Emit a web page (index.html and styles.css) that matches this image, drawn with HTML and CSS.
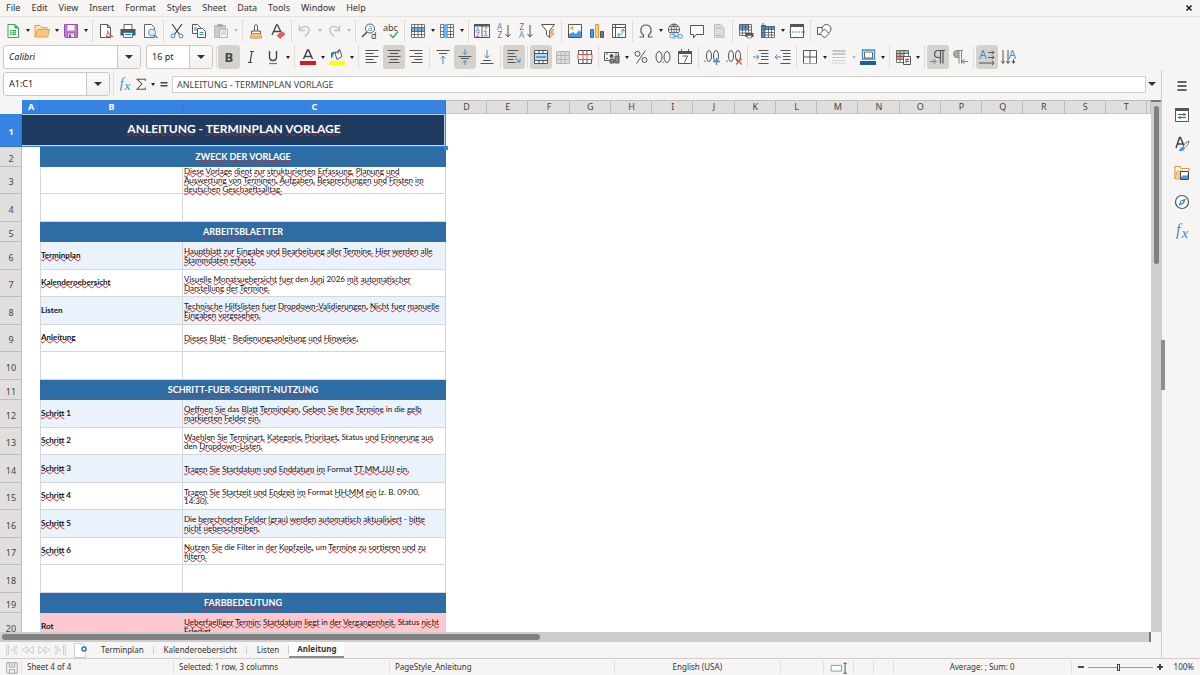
FILE: index.html
```html
<!DOCTYPE html>
<html lang="de">
<head>
  <meta charset="UTF-8" />
  <meta name="viewport" content="width=device-width, initial-scale=1.0" />
  <title>Terminplan Vorlage</title>
  <link rel="stylesheet" href="styles.css">
</head>
<body>
  <!-- Icons -->
  <svg class="icon-defs" aria-hidden="true">
    <symbol id="new" viewBox="0 0 16 16"><path d="M3 1.500h7l3.500 3.500v9.500H3z" fill="#f4fff6" stroke="#3fa55a"/><path d="M10 1.500V5h3.500" fill="#3fa55a" stroke="#3fa55a"/><path d="M5 7h6v5H5z" fill="#3fa55a"/><path d="M5 8.700h6M5 10.400h6M7 7v5" stroke="#fff" stroke-width=".6"/></symbol>
    <symbol id="open" viewBox="0 0 16 16"><path d="M1 14V2.500h5l1.500 2H13V7" fill="#fbe3b8" stroke="#e3a047"/><path d="M1 14L3.500 6.500H15.500L13.500 14z" fill="#fcc77c" stroke="#e3a047"/></symbol>
    <symbol id="save" viewBox="0 0 16 16"><path d="M1.500 1.500h13v13h-12l-1-1z" fill="#c27ad0" stroke="#9c4fae"/><path d="M4.500 2h7v5.500h-7z" fill="#fff"/><path d="M4.500 10h7v4.500h-7z" fill="#f3e4f6" stroke="#9c4fae" stroke-width=".8"/><path d="M6 11.500h2v3H6z" fill="#8d3fa0"/></symbol>
    <symbol id="pdf" viewBox="0 0 16 16"><path d="M2.500 1.500h7l3 3v10h-10z" fill="#fff" stroke="#555"/><path d="M9.500 1.500v3h3" fill="none" stroke="#555"/><path d="M7 15c2-2 3-5 2.500-7.500C11 12 13 13 15 13.500 12 12.500 9 13 7 15z" fill="none" stroke="#e05050"/></symbol>
    <symbol id="print" viewBox="0 0 16 16"><path d="M4 6V1.500h8V6" fill="#fff" stroke="#666"/><path d="M.5 6h15v6.500H.5z" fill="#50575c"/><path d="M3.500 9.500h9v5h-9z" fill="#f5fbff" stroke="#3584c8"/><path d="M5 11.500h6" stroke="#3584c8"/></symbol>
    <symbol id="preview" viewBox="0 0 16 16"><path d="M2.500 1.500h7l3 3v10h-10z" fill="#fff" stroke="#666"/><circle cx="10" cy="9.500" r="3.500" fill="#d4eafb" stroke="#4a9bd5"/><path d="M12.500 12l3 3" stroke="#4a9bd5" stroke-width="1.500"/></symbol>
    <symbol id="cut" viewBox="0 0 16 16"><path d="M3 1l7.500 10.500M13 1L5.500 11.500" stroke="#444" fill="none" stroke-width="1.200"/><circle cx="4" cy="13" r="2" fill="none" stroke="#3a8fd0"/><circle cx="12" cy="13" r="2" fill="none" stroke="#3a8fd0"/></symbol>
    <symbol id="copy" viewBox="0 0 16 16"><path d="M1.500 1.500h5l3 3v6h-8z" fill="#fff" stroke="#555"/><path d="M3 5h3M3 7h3" stroke="#3a8fd0"/><path d="M6.500 5.500h5l3 3v6h-8z" fill="#fff" stroke="#555"/><path d="M8.500 9.500h4M8.500 11.500h4" stroke="#3a8fd0"/></symbol>
    <symbol id="paste" viewBox="0 0 16 16"><path d="M1.500 2.500h11v12h-11z" fill="#ccc" stroke="#bbb"/><path d="M4.500 1h5v3h-5z" fill="#aaa"/><path d="M6.500 6.500h8v8h-8z" fill="#f2f2f2" stroke="#b5b5b5"/><path d="M8 9h5M8 11h5" stroke="#bbb"/></symbol>
    <symbol id="clone" viewBox="0 0 16 16"><path d="M6.500 8V2.500q1.500-2 3 0V8" fill="#fff" stroke="#555"/><path d="M3.500 8h9v2.500h-9z" fill="#fff" stroke="#555"/><path d="M3.500 10.500h9l1 4.500h-11z" fill="#f8c27d" stroke="#d98c35"/></symbol>
    <symbol id="clear" viewBox="0 0 16 16"><path d="M2 12L6.500 2h1L11 9M4 8.500h6" fill="none" stroke="#444" stroke-width="1.300"/><path d="M7 12.500l5-4 3 2.500-5 4.500z" fill="#e25b60" stroke="#c9353b" stroke-width=".5"/></symbol>
    <symbol id="undo" viewBox="0 0 16 16"><path d="M2.500 2v5.500H8M2.500 7C5 3 9.500 2.500 11.500 5c2 3-.5 6-4 8.500" fill="none" stroke="#c3c3c3" stroke-width="1.300"/></symbol>
    <symbol id="redo" viewBox="0 0 16 16"><path d="M13.500 2v5.500H8M13.500 7C11 3 6.500 2.500 4.500 5c-2 3 .5 6 4 8.500" fill="none" stroke="#c3c3c3" stroke-width="1.300"/></symbol>
    <symbol id="find" viewBox="0 0 16 16"><circle cx="9" cy="5.500" r="4.500" fill="#fff" stroke="#555"/><path d="M6 9l-5 5" stroke="#555" stroke-width="1.600"/><text x="6.700" y="8" class="glyph blue" font-size="8">a</text><text x="10" y="15.500" class="glyph" font-size="9">d</text></symbol>
    <symbol id="spell" viewBox="0 0 16 16"><text x="0" y="7.500" class="glyph" font-size="9">abc</text><path d="M7 11.500l3 3 5-6" fill="none" stroke="#3fa567" stroke-width="1.500"/></symbol>
    <symbol id="row" viewBox="0 0 16 16"><path d="M1.500 1.500h13v13h-13z" fill="#fff"/><path d="M1 4.500h14v4H1z" fill="#6bb3e8"/><path d="M1.500 1.500h13v13h-13zM1.500 4.500h13M1.500 8.500h13M1.500 11.500h13M4.500 1.500v13M8 1.500v13M11.500 1.500v13" fill="none" stroke="#555" stroke-width=".8"/></symbol>
    <symbol id="col" viewBox="0 0 16 16"><path d="M1.500 1.500h13v13h-13z" fill="#fff"/><path d="M1.500 1.500h13v13h-13zM1.500 4.500h13M1.500 8.500h13M1.500 11.500h13M4.500 1.500v13M8 1.500v13M11.500 1.500v13" fill="none" stroke="#555" stroke-width=".8"/><path d="M4.500 1h4v14h-4z" fill="#6bb3e8"/></symbol>
    <symbol id="sort" viewBox="0 0 16 16"><path d="M.5 1.500h15v13H.5z" fill="#fff" stroke="#555"/><path d="M0 1h16v2.500H0zM7.500 2h1v12h-1z" fill="#555"/><text x="1.500" y="9" class="glyph blue" font-size="6.500">A</text><text x="2" y="14.300" class="glyph violet" font-size="6.500">Z</text><text x="9.800" y="9" class="glyph violet" font-size="6.500">Z</text><text x="9.500" y="14.300" class="glyph blue" font-size="6.500">A</text></symbol>
    <symbol id="asc" viewBox="0 0 16 16"><text x="1" y="7" class="glyph blue" font-size="8">A</text><text x="1.500" y="15" class="glyph violet" font-size="8">Z</text><path d="M12 2v12M9.500 11l2.500 3 2.500-3" fill="none" stroke="#555"/></symbol>
    <symbol id="desc" viewBox="0 0 16 16"><text x="1.500" y="7" class="glyph violet" font-size="8">Z</text><text x="1" y="15" class="glyph blue" font-size="8">A</text><path d="M12 2v12M9.500 11l2.500 3 2.500-3" fill="none" stroke="#555"/></symbol>
    <symbol id="filter" viewBox="0 0 16 16"><path d="M1.500 1.500h13L9.500 8v6.500l-3-2.500V8z" fill="#fff" stroke="#555"/><path d="M12 6l-3 5h2l-1 5 5-6h-2.500l2-4z" fill="#f5ac55"/></symbol>
    <symbol id="image" viewBox="0 0 16 16"><path d="M1.500 1.500h13v13h-13z" fill="#fff" stroke="#555"/><circle cx="5" cy="5" r="1.800" fill="#f2a64c"/><path d="M2 14v-3l4-2 3 2 3-4 2 2v5z" fill="#4a9bdc"/></symbol>
    <symbol id="chart" viewBox="0 0 16 16"><path d="M1.500 6.500h3v8h-3z" fill="#4a9bdc" stroke="#2675b6"/><path d="M6.500 1.500h3v13h-3z" fill="#fbd08e" stroke="#e39a3b"/><path d="M11.500 8.500h3v6h-3z" fill="#777" stroke="#555"/></symbol>
    <symbol id="pivot" viewBox="0 0 16 16"><path d="M1.500 1.500h13v13h-13zM1.500 4.500h13M4.500 1.500v13" fill="#fff" stroke="#555"/><path d="M7 12c4 0 5-2 5-5M10 8.500L12 6l2 2.500M8.500 10L6.500 12l2 2" fill="none" stroke="#3a8fd0"/></symbol>
    <symbol id="omega" viewBox="0 0 16 16"><path d="M1.500 14h4v-2C1.500 9.500 2 2 8 2s6.500 7.500 2.500 10v2h4" fill="none" stroke="#555" stroke-width="1.200"/></symbol>
    <symbol id="link" viewBox="0 0 16 16"><circle cx="7" cy="6.500" r="5.500" fill="#fff" stroke="#555"/><path d="M1.500 6.500h11M7 1v11M2.500 3.500h9M2.500 9.500h9M7 1C3.500 4 3.500 9 7 12M7 1c3.500 3 3.500 8 0 11" fill="none" stroke="#555" stroke-width=".8"/><path d="M2.500 10.500h13v5h-13z" fill="#f6f5f4"/><rect x="3" y="11.500" width="5.500" height="3.500" rx="1.700" fill="none" stroke="#4a9bdc"/><rect x="10" y="11.500" width="5.500" height="3.500" rx="1.700" fill="none" stroke="#4a9bdc"/><path d="M6 13.200h6.500" stroke="#4a9bdc"/></symbol>
    <symbol id="comment" viewBox="0 0 16 16"><path d="M1.500 2.500h13v9H7L4.500 15v-3.500h-3z" fill="#fff" stroke="#555"/></symbol>
    <symbol id="header" viewBox="0 0 16 16"><path d="M3.500 1.500h6l3.500 3v10H3.500z" fill="#ddd" stroke="#c0c0c0"/><path d="M5 5h6M5 12.500h6" stroke="#b5b5b5"/></symbol>
    <symbol id="area" viewBox="0 0 16 16"><path d="M1.500 1.500h12v11h-12z" fill="#fff"/><path d="M1 1h10v6H1z" fill="#5aa8e4"/><path d="M1.500 1.500h12v11h-12zM1.500 4h12M1.500 7h12M1.500 10h12M4.500 1.500v11M7.500 1.500v11M10.500 1.500v11" fill="none" stroke="#555" stroke-width=".8"/><path d="M7.500 10h8v4h-8z" fill="#50575c"/><path d="M9.500 12.500h4V15h-4z" fill="#fff" stroke="#3a8fd0" stroke-width=".8"/></symbol>
    <symbol id="freeze" viewBox="0 0 16 16"><path d="M1.500 3.500h13v11h-13z" fill="#fff"/><path d="M1 3h14v3.500H1zM1 3h4v12H1z" fill="#4a9bdc"/><path d="M1.500 3.500h13v11h-13zM1.500 6.500h13M1.500 9.500h13M1.500 12h13M5 3.500v11M8.500 3.500v11M11.500 3.500v11" fill="none" stroke="#555" stroke-width=".8"/><path d="M3 0v5M1 2.500h5" stroke="#2675b6"/></symbol>
    <symbol id="split" viewBox="0 0 16 16"><path d="M1.500 1.500h13v13h-13z" fill="#fff" stroke="#555"/><path d="M1 1h14v3H1z" fill="#555"/><path d="M0 9h16" stroke="#3a8fd0" stroke-dasharray="2 1"/></symbol>
    <symbol id="shapes" viewBox="0 0 16 16"><path d="M1.500 4.500h7v7h-7z" fill="#fff" stroke="#555"/><circle cx="10.500" cy="6" r="4.500" fill="#fff" stroke="#555"/><path d="M8.500 6l4.500 4.500-4.500 4.500L4 10.500z" fill="#fff" stroke="#555"/></symbol>

    <symbol id="bold" viewBox="0 0 16 16"><text x="3.500" y="13" class="glyph" font-size="13" font-weight="bold">B</text></symbol>
    <symbol id="italic" viewBox="0 0 16 16"><path d="M7 2.500h4M5 13.500h4M9 2.500l-2 11" stroke="#444" stroke-width="1.200"/></symbol>
    <symbol id="underline" viewBox="0 0 16 16"><path d="M4.500 2v6q0 3.500 3.500 3.500T11.500 8V2" fill="none" stroke="#444" stroke-width="1.400"/><path d="M4 14.500h8" stroke="#3a8fd0" stroke-width="1.300"/></symbol>
    <symbol id="fcolor" viewBox="0 0 16 16"><path d="M3.500 10L7.500 1h1l4 9M5 7.500h6" fill="none" stroke="#444" stroke-width="1.500"/><path d="M0 12h16v4H0z" fill="#c9211e"/></symbol>
    <symbol id="fill" viewBox="0 0 16 16"><path d="M6 4l5-2.500 2 6-5 3z" fill="#fff" stroke="#555"/><path d="M9 5V1.500q1.500-2 2.500.5" fill="none" stroke="#555"/><path d="M2.500 9V4l4-1-2.500 2z" fill="#3a8fd0" stroke="#2675b6"/><path d="M0 12h16v4H0z" fill="#ff0"/></symbol>
    <symbol id="left" viewBox="0 0 16 16"><path d="M1.500 1.500h13M1.500 4.500h8M1.500 7.500h13M1.500 10.500h8M1.500 13.500h11" stroke="#555"/></symbol>
    <symbol id="center" viewBox="0 0 16 16"><path d="M1.500 1.500h13M4 4.500h8M1.500 7.500h13M4 10.500h8M2.500 13.500h11" stroke="#555"/></symbol>
    <symbol id="right" viewBox="0 0 16 16"><path d="M1.500 1.500h13M6.500 4.500h8M1.500 7.500h13M6.500 10.500h8M3.500 13.500h11" stroke="#555"/></symbol>
    <symbol id="top" viewBox="0 0 16 16"><path d="M1.500 1.500h13M4 4.500h8" stroke="#555"/><path d="M8 15V7M5.500 9.500L8 7l2.500 2.500" fill="none" stroke="#3a8fd0"/></symbol>
    <symbol id="middle" viewBox="0 0 16 16"><path d="M1.500 7.500h13M4 9.500h8" stroke="#555"/><path d="M8 0v5.500M6 3.500l2 2 2-2M8 16v-4.500M6 13.500l2-2 2 2" fill="none" stroke="#3a8fd0"/></symbol>
    <symbol id="bottom" viewBox="0 0 16 16"><path d="M1.500 14.500h13M4 11.500h8" stroke="#555"/><path d="M8 1v8M5.500 6.500L8 9l2.500-2.500" fill="none" stroke="#3a8fd0"/></symbol>
    <symbol id="wrap" viewBox="0 0 16 16"><path d="M1.500 1.500h11M1.500 4.500h7M1.500 7.500h9M1.500 10.500h6M1.500 13.500h8" stroke="#555"/><path d="M9 9l5 4M14 9.500V13h-3.500" fill="none" stroke="#3a8fd0"/></symbol>
    <symbol id="merge" viewBox="0 0 16 16"><path d="M1.500 1.500h13v13h-13z" fill="#fff"/><path d="M1 5h14v6H1z" fill="#b9dcf6"/><path d="M1.500 1.500h13v13h-13zM1.500 4.500h13M1.500 11.500h13M6 1.500v3M10 1.500v3M6 11.500v3M10 11.500v3" fill="none" stroke="#555"/><path d="M3 8h10" stroke="#3a8fd0" stroke-width="1.500"/></symbol>
    <symbol id="cells" viewBox="0 0 16 16"><path d="M1.500 2.500h13v12h-13z" fill="#ddd"/><path d="M1.500 2.500h13v12h-13zM1.500 6.500h13M1.500 10.500h13M6 2.500v12M10 2.500v12" fill="none" stroke="#b5b5b5"/></symbol>
    <symbol id="unmerge" viewBox="0 0 16 16"><path d="M1.500 1.500h13v13h-13z" fill="#fff"/><path d="M1.500 1.500h13v13h-13zM6 1.500v13M10 1.500v13" fill="none" stroke="#555"/><path d="M1 5.500h14v5H1zM6 5.500v5M10 5.500v5" fill="#fff" stroke="#e05050"/></symbol>
    <symbol id="currency" viewBox="0 0 16 16"><path d="M.5 3.500h14v8H.5z" fill="#fff" stroke="#555"/><circle cx="7.500" cy="7" r="2" fill="#555"/><path d="M2 5h2M11 5h2M2 9.500h2" stroke="#555"/><path d="M6 10h4v4H6zM11 7h4v7h-4z" fill="#888" stroke="#555"/></symbol>
    <symbol id="percent" viewBox="0 0 16 16"><circle cx="4.500" cy="4.800" r="2.500" fill="none" stroke="#555"/><circle cx="11.500" cy="11" r="2.500" fill="none" stroke="#555"/><path d="M12.500 1.500l-9 13" stroke="#555"/></symbol>
    <symbol id="number" viewBox="0 0 16 16"><ellipse cx="4" cy="8" rx="3" ry="5.500" fill="none" stroke="#555"/><ellipse cx="12" cy="8" rx="3" ry="5.500" fill="none" stroke="#555"/><path d="M8 12.500v1.500" stroke="#555"/></symbol>
    <symbol id="date" viewBox="0 0 16 16"><path d="M1.500 2.500h13v12h-13z" fill="#fff" stroke="#555"/><path d="M1 2h14v3H1zM4 0h1v3H4zM11 0h1v3h-1z" fill="#555"/><path d="M5.500 7h5l-3 6.500" fill="none" stroke="#555"/></symbol>
    <symbol id="adddec" viewBox="0 0 16 16"><ellipse cx="5" cy="7" rx="2.500" ry="5.500" fill="none" stroke="#555"/><ellipse cx="12" cy="7" rx="2.500" ry="5.500" fill="none" stroke="#555"/><path d="M1 11.500V13" stroke="#555"/><path d="M9 12.500h7M12.500 9v7" stroke="#3a8fd0" stroke-width="1.300"/></symbol>
    <symbol id="deldec" viewBox="0 0 16 16"><ellipse cx="5" cy="7" rx="2.500" ry="5.500" fill="none" stroke="#555"/><ellipse cx="12" cy="7" rx="2.500" ry="5.500" fill="none" stroke="#555"/><path d="M1 11.500V13" stroke="#555"/><path d="M10 9.500l6 6M16 9.500l-6 6" stroke="#e05050" stroke-width="1.200"/></symbol>
    <symbol id="indent" viewBox="0 0 16 16"><path d="M5.500 1.500h10M8 4.500h7.500M8 7.500h7.500M8 10.500h7.500M5.500 14.500h10" stroke="#555"/><path d="M0 8h6M3.500 5.500L6 8l-2.500 2.500" fill="none" stroke="#3a8fd0"/></symbol>
    <symbol id="outdent" viewBox="0 0 16 16"><path d="M5.500 1.500h10M8 4.500h7.500M8 7.500h7.500M8 10.500h7.500M5.500 14.500h10" stroke="#555"/><path d="M0 8h6M2.500 5.500L0 8l2.500 2.500" fill="none" stroke="#3a8fd0"/></symbol>
    <symbol id="borders" viewBox="0 0 16 16"><path d="M1.500 14.500v-13h13v13M8 1.500v13M1.500 8h13" fill="#fff" stroke="#555"/><path d="M1 14.500h14" stroke="#e8964a"/></symbol>
    <symbol id="bstyle" viewBox="0 0 16 16"><path d="M1.500 2h13M1.500 5h13" stroke="#b5b5b5" stroke-width="1.500"/><path d="M1.500 8.500h13" stroke="#b5b5b5" stroke-dasharray="3 1"/><path d="M1.500 11.500h13M1.500 14h13" stroke="#b5b5b5" stroke-dasharray="1 1"/></symbol>
    <symbol id="bcolor" viewBox="0 0 16 16"><path d="M2.500 1h12v9h-12z" fill="#fff" stroke="#3a8fd0" stroke-width="1.400"/><path d="M4.500 3h8v6h-8z" fill="#fff" stroke="#666"/><path d="M0 12h16v4H0z" fill="#1f5c9b"/></symbol>
    <symbol id="cond" viewBox="0 0 16 16"><path d="M1.500 1.500h12v12h-12z" fill="#fff"/><path d="M1 1h13v3.500H1z" fill="#8ed6a2"/><path d="M1 4.500h8V10H1z" fill="#f19a94"/><path d="M1.500 1.500h12v12h-12zM1.500 4.500h12M1.500 7.500h12M1.500 10.500h12M5 1.500v12M9 1.500v12" fill="none" stroke="#555" stroke-width=".8"/><path d="M8.500 7.500h7v8h-7z" fill="#fff" stroke="#555"/><path d="M10 10.500h4M10 12.500h4M13 9l-2 5" stroke="#555" stroke-width=".8"/></symbol>
    <symbol id="ltr" viewBox="0 0 16 16"><path d="M15 1.500H8a3.500 3.500 0 0 0 0 7h2M10.500 1.500v13M13 1.500v13" fill="none" stroke="#555" stroke-width="1.200"/><path d="M0 12.500h6M3.500 10L6 12.500 3.500 15" fill="none" stroke="#3a8fd0"/></symbol>
    <symbol id="rtl" viewBox="0 0 16 16"><path d="M7 1.500H5a3.500 3.500 0 0 0 0 7h2z" fill="#aaa"/><path d="M11 1.500H5a3.500 3.500 0 0 0 0 7h2M7 1.500v13M9.500 1.500v13" fill="none" stroke="#888"/><path d="M10 12.500h6M12.500 10L10 12.500l2.500 2.500" fill="none" stroke="#3a8fd0"/></symbol>
    <symbol id="horiz" viewBox="0 0 16 16"><text x="0" y="10" class="glyph blue" font-size="12">A</text><path d="M9 3.500h6M9 8.500h6M0 14h15M13 1.500l2 2-2 2M13 6.500l2 2-2 2M13 12l2 2-2 2" fill="none" stroke="#555"/></symbol>
    <symbol id="vert" viewBox="0 0 16 16"><text x="7.500" y="10" class="glyph blue" font-size="12">A</text><path d="M2 1v13M7 1v13M12.500 10v4M.5 12L2 14.500 3.500 12M5.500 12L7 14.500 8.500 12M11 12l1.500 2.500L14 12" fill="none" stroke="#555"/></symbol>

    <symbol id="fx" viewBox="0 0 16 16"><text x="2" y="12" class="serif blue" font-size="16">f</text><text x="7.500" y="15" class="serif blue" font-size="15">x</text></symbol>
    <symbol id="sum" viewBox="0 0 16 16"><path d="M13 4.500V2.500H3.500L9 8l-5.500 6H13V12" fill="none" stroke="#555" stroke-width="1.200"/></symbol>
    <symbol id="equals" viewBox="0 0 16 16"><path d="M4 6.500h8M4 10h8" stroke="#444" stroke-width="1.800"/></symbol>
    <symbol id="menu" viewBox="0 0 16 16"><path d="M3.500 4h9M3.500 8h9M3.500 12h9" stroke="#333" stroke-width="1.400"/></symbol>
    <symbol id="props" viewBox="0 0 16 16"><path d="M1.500 1.500h13v13h-13z" fill="#fff" stroke="#555"/><path d="M1 1h14v3H1z" fill="#555"/><path d="M4 7.500h8M4 10.500h8" stroke="#555"/><path d="M10 6v3M6 9v3" stroke="#3a8fd0" stroke-width="1.500"/></symbol>
    <symbol id="styles" viewBox="0 0 16 16"><path d="M2 12L5.500 1.500h1L10 10M3.500 8h5" fill="none" stroke="#444" stroke-width="1.500"/><path d="M15 5q-4 1-6 6l1.500 1Q15 9 15 5z" fill="#fff" stroke="#555" stroke-width=".8"/><path d="M9 11q-3 0-4 4 4 1 6-2.500z" fill="#4a9bdc"/></symbol>
    <symbol id="gallery" viewBox="0 0 16 16"><path d="M1 14V1.500h5l1 2h8V6" fill="#fff" stroke="#e8964a" stroke-width="1.200"/><path d="M1 14L3 6h6v8z" fill="#fbd08e" stroke="#e8964a" stroke-width=".8"/><path d="M6.500 6.500h8v8h-8z" fill="#fff" stroke="#444"/><path d="M7 14v-2l3-2 2 1 2-2v5z" fill="#4a9bdc"/></symbol>
    <symbol id="nav" viewBox="0 0 16 16"><circle cx="8" cy="8" r="6.500" fill="#fff" stroke="#555" stroke-width="1.200"/><path d="M12 4.500l-2 5-5.500 2.500 2-5.500z" fill="#3a8fd0"/><circle cx="8" cy="8" r="1.100" fill="#fff"/></symbol>
    <symbol id="addsheet" viewBox="0 0 16 16"><path d="M1.500 1.500h8l3 3v11h-11z" fill="#fff" stroke="#d0d0d0"/><circle cx="11" cy="7" r="2" fill="#fff" stroke="#2f6fb5" stroke-width="1.500"/></symbol>
    <symbol id="disk" viewBox="0 0 16 16"><path d="M2 2h12v12H3l-1-1zM5 2v5h6V2M5 14v-4h6v4M8 3v3" fill="none" stroke="#999"/></symbol>
    <symbol id="first" viewBox="0 0 16 16"><path d="M2 2v12M4 2v12M13 3L7 8l6 5M13 3v3l-3 2 3 2v3" fill="none" stroke="#c9c9c9"/></symbol>
    <symbol id="prev" viewBox="0 0 16 16"><path d="M7 4L1 8l6 4zM14 4L8 8l6 4z" fill="none" stroke="#c9c9c9"/></symbol>
    <symbol id="next" viewBox="0 0 16 16"><path d="M2 4l6 4-6 4zM9 4l6 4-6 4z" fill="none" stroke="#c9c9c9"/></symbol>
    <symbol id="last" viewBox="0 0 16 16"><path d="M14 2v12M12 2v12M3 3l6 5-6 5M3 3v3l3 2-3 2v3" fill="none" stroke="#c9c9c9"/></symbol>
    <symbol id="selmode" viewBox="0 0 20 16"><path d="M1 5h12v6.500H1z" fill="#fff" stroke="#4a9bdc"/><path d="M15 2.500h4M15 14h4M17 2.500V14" stroke="#444"/></symbol>
  </svg>

  <nav class="menubar">
    <button>File</button>
    <button>Edit</button>
    <button>View</button>
    <button>Insert</button>
    <button>Format</button>
    <button>Styles</button>
    <button>Sheet</button>
    <button>Data</button>
    <button>Tools</button>
    <button>Window</button>
    <button>Help</button>
    <button class="close" aria-label="Close"><svg viewBox="0 0 8 8"><path d="M1.500 1.500l5 5M6.500 1.500l-5 5" stroke="#222" stroke-width="1.600"/></svg></button>
  </nav>

  <div class="toolbar standard">
    <button class="tool" aria-label="New"><svg><use href="#new"/></svg></button><button class="drop" aria-label="More"></button>
    <button class="tool" aria-label="Open"><svg><use href="#open"/></svg></button><button class="drop" aria-label="More"></button>
    <button class="tool" aria-label="Save"><svg><use href="#save"/></svg></button><button class="drop" aria-label="More"></button>
    <span class="sep"></span>
    <button class="tool" aria-label="Export as PDF"><svg><use href="#pdf"/></svg></button>
    <button class="tool" aria-label="Print"><svg><use href="#print"/></svg></button>
    <button class="tool" aria-label="Print Preview"><svg><use href="#preview"/></svg></button>
    <span class="sep"></span>
    <button class="tool" aria-label="Cut"><svg><use href="#cut"/></svg></button>
    <button class="tool" aria-label="Copy"><svg><use href="#copy"/></svg></button>
    <button class="tool" aria-label="Paste"><svg><use href="#paste"/></svg></button><button class="drop off" aria-label="More"></button>
    <span class="sep"></span>
    <button class="tool" aria-label="Clone Formatting"><svg><use href="#clone"/></svg></button>
    <button class="tool" aria-label="Clear Formatting"><svg><use href="#clear"/></svg></button>
    <span class="sep"></span>
    <button class="tool" aria-label="Undo"><svg><use href="#undo"/></svg></button><button class="drop off" aria-label="More"></button>
    <button class="tool" aria-label="Redo"><svg><use href="#redo"/></svg></button><button class="drop off" aria-label="More"></button>
    <span class="sep"></span>
    <button class="tool" aria-label="Find and Replace"><svg><use href="#find"/></svg></button>
    <button class="tool" aria-label="Spelling"><svg><use href="#spell"/></svg></button>
    <span class="sep"></span>
    <button class="tool" aria-label="Row"><svg><use href="#row"/></svg></button><button class="drop" aria-label="More"></button>
    <button class="tool" aria-label="Column"><svg><use href="#col"/></svg></button><button class="drop" aria-label="More"></button>
    <span class="sep"></span>
    <button class="tool" aria-label="Sort"><svg><use href="#sort"/></svg></button>
    <button class="tool" aria-label="Sort Ascending"><svg><use href="#asc"/></svg></button>
    <button class="tool" aria-label="Sort Descending"><svg><use href="#desc"/></svg></button>
    <button class="tool" aria-label="AutoFilter"><svg><use href="#filter"/></svg></button>
    <span class="sep"></span>
    <button class="tool" aria-label="Image"><svg><use href="#image"/></svg></button>
    <button class="tool" aria-label="Chart"><svg><use href="#chart"/></svg></button>
    <button class="tool" aria-label="Pivot Table"><svg><use href="#pivot"/></svg></button>
    <span class="sep"></span>
    <button class="tool" aria-label="Special Character"><svg><use href="#omega"/></svg></button><button class="drop" aria-label="More"></button>
    <button class="tool" aria-label="Hyperlink"><svg><use href="#link"/></svg></button>
    <button class="tool" aria-label="Comment"><svg><use href="#comment"/></svg></button>
    <button class="tool" aria-label="Headers and Footers"><svg><use href="#header"/></svg></button>
    <span class="sep"></span>
    <button class="tool" aria-label="Print Area"><svg><use href="#area"/></svg></button>
    <button class="tool" aria-label="Freeze"><svg><use href="#freeze"/></svg></button><button class="drop" aria-label="More"></button>
    <button class="tool" aria-label="Split Window"><svg><use href="#split"/></svg></button>
    <span class="sep"></span>
    <button class="tool" aria-label="Draw Functions"><svg><use href="#shapes"/></svg></button>
  </div>

  <div class="toolbar formatting">
    <label class="combo font-name"><select aria-label="Font Name"><option>Calibri</option></select></label>
    <label class="combo font-size"><select aria-label="Font Size"><option>16 pt</option></select></label>
    <span class="sep"></span>
    <button class="tool on" aria-label="Bold"><svg><use href="#bold"/></svg></button>
    <button class="tool" aria-label="Italic"><svg><use href="#italic"/></svg></button>
    <button class="tool" aria-label="Underline"><svg><use href="#underline"/></svg></button><button class="drop" aria-label="More"></button>
    <span class="sep"></span>
    <button class="tool" aria-label="Font Color"><svg><use href="#fcolor"/></svg></button><button class="drop" aria-label="More"></button>
    <button class="tool" aria-label="Background Color"><svg><use href="#fill"/></svg></button><button class="drop" aria-label="More"></button>
    <span class="sep"></span>
    <button class="tool" aria-label="Align Left"><svg><use href="#left"/></svg></button>
    <button class="tool on" aria-label="Align Center"><svg><use href="#center"/></svg></button>
    <button class="tool" aria-label="Align Right"><svg><use href="#right"/></svg></button>
    <span class="sep"></span>
    <button class="tool" aria-label="Align Top"><svg><use href="#top"/></svg></button>
    <button class="tool on" aria-label="Center Vertically"><svg><use href="#middle"/></svg></button>
    <button class="tool" aria-label="Align Bottom"><svg><use href="#bottom"/></svg></button>
    <span class="sep"></span>
    <button class="tool on" aria-label="Wrap Text"><svg><use href="#wrap"/></svg></button>
    <span class="sep"></span>
    <button class="tool on" aria-label="Merge and Center"><svg><use href="#merge"/></svg></button>
    <button class="tool" aria-label="Merge Cells"><svg><use href="#cells"/></svg></button>
    <button class="tool" aria-label="Unmerge Cells"><svg><use href="#unmerge"/></svg></button>
    <span class="sep"></span>
    <button class="tool" aria-label="Currency"><svg><use href="#currency"/></svg></button><button class="drop" aria-label="More"></button>
    <button class="tool" aria-label="Percent"><svg><use href="#percent"/></svg></button>
    <button class="tool" aria-label="Number"><svg><use href="#number"/></svg></button>
    <button class="tool" aria-label="Date"><svg><use href="#date"/></svg></button>
    <span class="sep"></span>
    <button class="tool" aria-label="Add Decimal"><svg><use href="#adddec"/></svg></button>
    <button class="tool" aria-label="Delete Decimal"><svg><use href="#deldec"/></svg></button>
    <span class="sep"></span>
    <button class="tool" aria-label="Increase Indent"><svg><use href="#indent"/></svg></button>
    <button class="tool" aria-label="Decrease Indent"><svg><use href="#outdent"/></svg></button>
    <span class="sep"></span>
    <button class="tool" aria-label="Borders"><svg><use href="#borders"/></svg></button><button class="drop" aria-label="More"></button>
    <button class="tool" aria-label="Border Style"><svg><use href="#bstyle"/></svg></button><button class="drop off" aria-label="More"></button>
    <button class="tool" aria-label="Border Color"><svg><use href="#bcolor"/></svg></button><button class="drop" aria-label="More"></button>
    <span class="sep"></span>
    <button class="tool" aria-label="Conditional Formatting"><svg><use href="#cond"/></svg></button><button class="drop" aria-label="More"></button>
    <span class="sep"></span>
    <button class="tool on" aria-label="Left-to-Right"><svg><use href="#ltr"/></svg></button>
    <button class="tool" aria-label="Right-to-Left"><svg><use href="#rtl"/></svg></button>
    <span class="sep"></span>
    <button class="tool on" aria-label="Text left to right"><svg><use href="#horiz"/></svg></button>
    <button class="tool" aria-label="Text top to bottom"><svg><use href="#vert"/></svg></button>
  </div>

  <div class="workspace">
    <main class="document">
      <div class="formula-bar">
        <label class="combo name-box"><select aria-label="Name Box"><option>A1:C1</option></select></label>
        <span class="sep"></span>
        <button class="small-tool" aria-label="Function Wizard"><svg><use href="#fx"/></svg></button>
        <button class="small-tool" aria-label="Select Function"><svg><use href="#sum"/></svg></button><button class="drop" aria-label="More"></button>
        <button class="small-tool" aria-label="Formula"><svg><use href="#equals"/></svg></button>
        <input class="formula" type="text" aria-label="Input line" value="ANLEITUNG - TERMINPLAN VORLAGE">
        <button class="drop big" aria-label="Expand Formula Bar"></button>
      </div>

      <div class="grid-area">
        <div class="sheet">
          <table>
            <colgroup>
              <col class="c-head"><col class="c-a"><col class="c-b"><col class="c-c">
              <col span="17"><col class="c-last">
            </colgroup>
            <thead>
              <tr>
                <th class="corner"></th><th class="sel">A</th><th class="sel">B</th><th class="sel">C</th>
                <th>D</th><th>E</th><th>F</th><th>G</th><th>H</th><th>I</th><th>J</th><th>K</th><th>L</th>
                <th>M</th><th>N</th><th>O</th><th>P</th><th>Q</th><th>R</th><th>S</th><th>T</th><th></th>
              </tr>
            </thead>
            <tbody>
              <tr class="title-row"><th class="sel">1</th><td class="title" colspan="3">ANLEITUNG - TERMINPLAN VORLAGE<span class="handle"></span></td></tr>
              <tr class="section"><th>2</th><td></td><td colspan="2">ZWECK DER VORLAGE</td></tr>
              <tr><th>3</th><td></td><td class="key"></td><td class="text">Diese Vorlage dient zur strukturierten Erfassung, Planung und<br>Auswertung von Terminen, Aufgaben, Besprechungen und Fristen im<br>deutschen Geschaeftsalltag.</td></tr>
              <tr><th>4</th><td></td><td class="key"></td><td class="text"></td></tr>
              <tr class="section"><th>5</th><td></td><td colspan="2">ARBEITSBLAETTER</td></tr>
              <tr class="band"><th>6</th><td></td><td class="key">Terminplan</td><td class="text">Hauptblatt zur Eingabe und Bearbeitung aller Termine. Hier werden alle<br>Stammdaten erfasst.</td></tr>
              <tr><th>7</th><td></td><td class="key">Kalenderoebersicht</td><td class="text">Visuelle Monatsuebersicht fuer den Juni 2026 mit automatischer<br>Darstellung der Termine.</td></tr>
              <tr class="band"><th>8</th><td></td><td class="key">Listen</td><td class="text">Technische Hilfslisten fuer Dropdown-Validierungen. Nicht fuer manuelle<br>Eingaben vorgesehen.</td></tr>
              <tr><th>9</th><td></td><td class="key">Anleitung</td><td class="text">Dieses Blatt - Bedienungsanleitung und Hinweise.</td></tr>
              <tr><th>10</th><td></td><td class="key"></td><td class="text"></td></tr>
              <tr class="section"><th>11</th><td></td><td colspan="2">SCHRITT-FUER-SCHRITT-NUTZUNG</td></tr>
              <tr class="band"><th>12</th><td></td><td class="key">Schritt 1</td><td class="text">Oeffnen Sie das Blatt Terminplan. Geben Sie Ihre Termine in die gelb<br>markierten Felder ein.</td></tr>
              <tr><th>13</th><td></td><td class="key">Schritt 2</td><td class="text">Waehlen Sie Terminart, Kategorie, Prioritaet, Status und Erinnerung aus<br>den Dropdown-Listen.</td></tr>
              <tr class="band"><th>14</th><td></td><td class="key">Schritt 3</td><td class="text">Tragen Sie Startdatum und Enddatum im Format TT.MM.JJJJ ein.</td></tr>
              <tr><th>15</th><td></td><td class="key">Schritt 4</td><td class="text">Tragen Sie Startzeit und Endzeit im Format HH:MM ein (z. B. 09:00,<br>14:30).</td></tr>
              <tr class="band"><th>16</th><td></td><td class="key">Schritt 5</td><td class="text">Die berechneten Felder (grau) werden automatisch aktualisiert - bitte<br>nicht ueberschreiben.</td></tr>
              <tr><th>17</th><td></td><td class="key">Schritt 6</td><td class="text">Nutzen Sie die Filter in der Kopfzeile, um Termine zu sortieren und zu<br>filtern.</td></tr>
              <tr><th>18</th><td></td><td class="key"></td><td class="text"></td></tr>
              <tr class="section"><th>19</th><td></td><td colspan="2">FARBBEDEUTUNG</td></tr>
              <tr class="red"><th>20</th><td></td><td class="key">Rot</td><td class="text">Ueberfaelliger Termin: Startdatum liegt in der Vergangenheit, Status nicht<br>Erledigt.</td></tr>
            </tbody>
          </table>
        </div>
        <div class="vscroll"><div class="thumb"></div></div>
      </div>
      <div class="hscroll"><div class="thumb"></div></div>

      <div class="tabs">
        <button class="tab-nav" aria-label="First Sheet"><svg><use href="#first"/></svg></button>
        <button class="tab-nav" aria-label="Previous Sheet"><svg><use href="#prev"/></svg></button>
        <button class="tab-nav" aria-label="Next Sheet"><svg><use href="#next"/></svg></button>
        <button class="tab-nav" aria-label="Last Sheet"><svg><use href="#last"/></svg></button>
        <button class="tab-add" aria-label="Add Sheet"><svg><use href="#addsheet"/></svg></button>
        <button class="tab">Terminplan</button>
        <button class="tab">Kalenderoebersicht</button>
        <button class="tab">Listen</button>
        <button class="tab current">Anleitung</button>
      </div>
    </main>

    <aside class="sidebar">
      <button aria-label="Sidebar Settings"><svg><use href="#menu"/></svg></button>
      <button aria-label="Properties"><svg><use href="#props"/></svg></button>
      <button aria-label="Styles"><svg><use href="#styles"/></svg></button>
      <button aria-label="Gallery"><svg><use href="#gallery"/></svg></button>
      <button aria-label="Navigator"><svg><use href="#nav"/></svg></button>
      <button aria-label="Functions"><svg><use href="#fx"/></svg></button>
      <span class="grip"></span>
    </aside>
  </div>

  <footer class="statusbar">
    <span class="st-save"><svg><use href="#disk"/></svg></span>
    <span class="st-sheet">Sheet 4 of 4</span>
    <span class="st-sel">Selected: 1 row, 3 columns</span>
    <span class="st-style">PageStyle_Anleitung</span>
    <span class="st-lang">English (USA)</span>
    <span class="st-mode"></span>
    <span class="st-icon"><svg><use href="#selmode"/></svg></span>
    <span class="st-blank"></span>
    <span class="st-blank"></span>
    <span class="st-sum">Average: ; Sum: 0</span>
    <div class="zoom">
      <button aria-label="Zoom Out"><svg viewBox="0 0 8 8"><path d="M1 4h6" stroke="#222" stroke-width="1.600"/></svg></button>
      <input type="range" min="0" max="100" value="48" aria-label="Zoom">
      <button aria-label="Zoom In"><svg viewBox="0 0 8 8"><path d="M1 4h6M4 1v6" stroke="#222" stroke-width="1.600"/></svg></button>
    </div>
    <span class="st-zoom">100%</span>
  </footer>

  <script src="script.js"></script>
</body>
</html>
```

FILE: styles.css
```css
* { box-sizing: border-box; }
body { margin: 0; height: 100vh; display: flex; flex-direction: column; overflow: hidden; background: #f6f5f4; color: #333; font-family: "Noto Sans", sans-serif; font-size: 9px; line-height: 12px; }
button { border: none; background: none; padding: 0; margin: 0; font: inherit; color: inherit; flex: none; }
svg { display: block; width: 16px; height: 16px; }
.icon-defs { display: none; }
.glyph { font-family: "Noto Sans", sans-serif; fill: #444; }
.serif { font-family: "Liberation Serif", serif; font-style: italic; }
.blue { fill: #3a8fd0; }
.violet { fill: #a347ba; }

/* Menu */
.menubar { display: flex; align-items: center; height: 17px; flex: none; padding-left: 1px; border-bottom: 1px solid #e6e4e2; }
.menubar button { padding: 0 6px 0 5px; }
.menubar .close { margin-left: auto; padding: 0 7px; }
.close svg { width: 8px; height: 8px; }

/* Toolbars */
.toolbar { display: flex; align-items: center; flex: none; padding-left: 2px; }
.standard { height: 27px; }
.formatting { height: 26px; }
.tool { width: 22px; height: 24px; display: flex; align-items: center; justify-content: center; border-radius: 3px; }
.tool.on { background: #d5d1cd; }
.drop { width: 7px; height: 16px; display: flex; align-items: center; justify-content: center; }
.drop::after { content: ""; border: 2px solid transparent; border-top: 3px solid #222; border-bottom: none; }
.drop.off::after { border-top-color: #bbb; }
.drop.big::after, .combo::after { content: ""; border: 4px solid transparent; border-top: 4px solid #333; border-bottom: none; }
.sep { width: 5px; height: 22px; flex: none; background: linear-gradient(#dfdcd9, #dfdcd9) center / 1px 100% no-repeat; }
.drop + .sep { width: 6px; }
.combo { position: relative; display: flex; flex: none; height: 24px; border: 1px solid #cdc7c2; border-radius: 3px; background: #fff; overflow: hidden; }
.combo::after { position: absolute; right: 7px; top: 9px; }
.combo select { appearance: none; width: 100%; border: none; outline: none; background: linear-gradient(#cdc7c2, #cdc7c2) right 22px top / 1px 100% no-repeat, linear-gradient(#fbfafa, #f3f1f0) right / 22px 100% no-repeat; padding: 0 24px 0 5px; font: inherit; color: #222; }
.font-name { width: 138px; margin: 0 5px 0 1px; font-style: italic; }
.font-size { width: 67px; margin-right: 1px; }
.font-size + .sep { width: 4px; }

/* Work area */
.workspace { flex: 1; display: flex; min-height: 0; }
.document { flex: 1; min-width: 0; display: flex; flex-direction: column; }
.formula-bar { display: flex; align-items: center; height: 30px; flex: none; padding: 0 4px 2px 3px; }
.name-box { width: 107px; }
.small-tool { width: 16px; height: 16px; }
.small-tool svg { width: 14px; height: 14px; margin: 1px; }
.formula-bar .sep { width: 7px; }
.formula { flex: 1; min-width: 0; height: 17px; border: 1px solid #d2cecb; background: #fff; padding: 0 4px; font: inherit; color: #444; outline: none; }
.drop.big { width: 11px; }

.grid-area { flex: 1; display: flex; min-height: 0; }
.sheet { flex: 1; min-width: 0; overflow: hidden; background: #fff; }
table { width: 100%; table-layout: fixed; border-collapse: separate; border-spacing: 0; }
th, td { padding: 0; vertical-align: middle; }
.c-head { width: 22px; }
.c-a { width: 18px; }
.c-b { width: 143px; }
.c-c { width: 263px; }
.c-last { width: 4px; }
th { background: #e0dfde; box-shadow: inset -1px -1px #bfbdbb; font-weight: normal; color: #444; }
thead th { height: 14px; box-shadow: inset -1px 1px #bfbdbb, inset 0 -1px #c9c7c5; }
th.sel { background: #3584e4; color: #fff; font-weight: bold; box-shadow: inset -1px -1px #2f78d2; }
th.corner { background: #f6f5f4; box-shadow: none; }
tbody tr { height: 27px; }
tbody tr:nth-child(even) { height: 28px; }
tbody tr.title-row { height: 33px; }
tbody tr.section { height: 20px; }
tbody th { padding-top: 3px; }
td { font-family: "Lato", sans-serif; font-size: 8px; line-height: 9px; color: #111; white-space: nowrap; }
.title { position: relative; background: #1f3a5f; color: #fff; font-size: 12px; font-weight: bold; line-height: 16px; text-align: center; padding-bottom: 3px; box-shadow: inset -1px 0 #3584e4, inset -2px 1px #b9d6f6, inset 0 -1px #3584e4, inset 0 -2px #b9d6f6; }
.handle { position: absolute; right: -2px; bottom: -3px; width: 4px; height: 4px; background: #3584e4; z-index: 1; }
.section td + td { background: #2e6da4; color: #fff; font-size: 9px; font-weight: bold; text-align: center; padding-bottom: 2px; }
.key, .text { box-shadow: inset -1px -1px #d3d6db; padding-left: 1px; }
.key { font-weight: bold; padding-bottom: 2px; box-shadow: inset -1px -1px #d3d6db, inset 1px 0 #d3d6db; }
.band .key, .band .text { background: #eaf2fb; }
.red .key, .red .text { background: #ffc7ce; }
.sp { text-decoration: underline wavy #e02020 1px; text-decoration-skip-ink: none; text-underline-offset: -1px; }

/* Scrollbars */
.vscroll { width: 10px; flex: none; background: #cfcfcf; padding: 4px 2px 0 3px; border-top: 2px solid #777; }
.vscroll .thumb { height: 30%; background: #808080; border-radius: 3px; }
.hscroll { height: 10px; flex: none; margin-right: 10px; background: #cdcdcd; padding: 2px; border-right: 2px solid #777; }
.hscroll .thumb { width: 47%; height: 6px; background: #808080; border-radius: 3px; }

/* Sheet tabs */
.tabs { display: flex; height: 16px; flex: none; align-items: stretch; padding-left: 4px; font-size: 8px; }
.tab-nav svg { width: 16px; height: 14px; }
.tab-add { margin: 0 2px 0 5px; }
.tab { padding: 0 10px; background: linear-gradient(#cfccca, #cfccca) right center / 1px 8px no-repeat; }
.tab.current { background: #fff; font-weight: bold; border-bottom: 2px solid #8c8c8c; padding: 0 8px; }

/* Sidebar */
.sidebar { position: relative; width: 39px; flex: none; display: flex; flex-direction: column; align-items: center; gap: 13px; padding: 8px 0 0 1px; border-left: 1px solid #cfccca; }
.grip { position: absolute; left: -1px; top: 46%; width: 4px; height: 50px; background: #8f8f8f; }

/* Status bar */
.statusbar { display: flex; align-items: center; height: 17px; flex: none; border-top: 1px solid #cfccca; font-size: 8px; }
.statusbar > span { height: 13px; border-right: 1px solid #e3e1df; padding: 0 5px; flex: none; white-space: nowrap; }
.statusbar > .st-save { width: 22px; padding: 0; }
.st-save svg { width: 14px; height: 14px; margin-left: 5px; }
.st-sheet { width: 152px; }
.st-sel { width: 216px; }
.st-style { width: 225px; }
.statusbar > .st-lang { flex: 1; text-align: center; }
.st-mode { width: 43px; }
.statusbar > .st-icon { width: 30px; padding: 0 0 0 5px; }
.st-icon svg { width: 20px; height: 14px; }
.st-blank { width: 20px; }
.st-sum { width: 178px; text-align: center; }
.zoom { display: flex; align-items: center; gap: 3px; padding: 0 5px; }
.zoom svg { width: 8px; height: 8px; }
.zoom input { appearance: none; width: 65px; height: 10px; margin: 0; background: linear-gradient(#999, #999) center / 100% 1px no-repeat; }
.zoom input::-webkit-slider-thumb { appearance: none; width: 3px; height: 7px; background: #f6f5f4; border: 1px solid #444; }
.statusbar > .st-zoom { border: none; padding: 0 6px 0 5px; }
```

FILE: script.js
```js
// Words known to the dictionary, everything else gets the red wavy line
const known = ['Die', 'die', 'das', 'den', 'in', 'um', 'Filter', 'Format', 'Status', 'Listen', 'Rot', '(z.', 'B.'];

document.querySelectorAll('td').forEach(cell => {
  Array.from(cell.childNodes).forEach(node => {
    if (node.nodeType !== Node.TEXT_NODE) return;
    const parts = node.textContent.split(/(\s+)/);
    const out = document.createDocumentFragment();
    parts.forEach(part => {
      if (!/[A-Za-z]/.test(part) || known.includes(part)) {
        out.append(part);
        return;
      }
      const word = document.createElement('span');
      word.className = 'sp';
      word.textContent = part;
      out.append(word);
    });
    node.replaceWith(out);
  });
});
```
